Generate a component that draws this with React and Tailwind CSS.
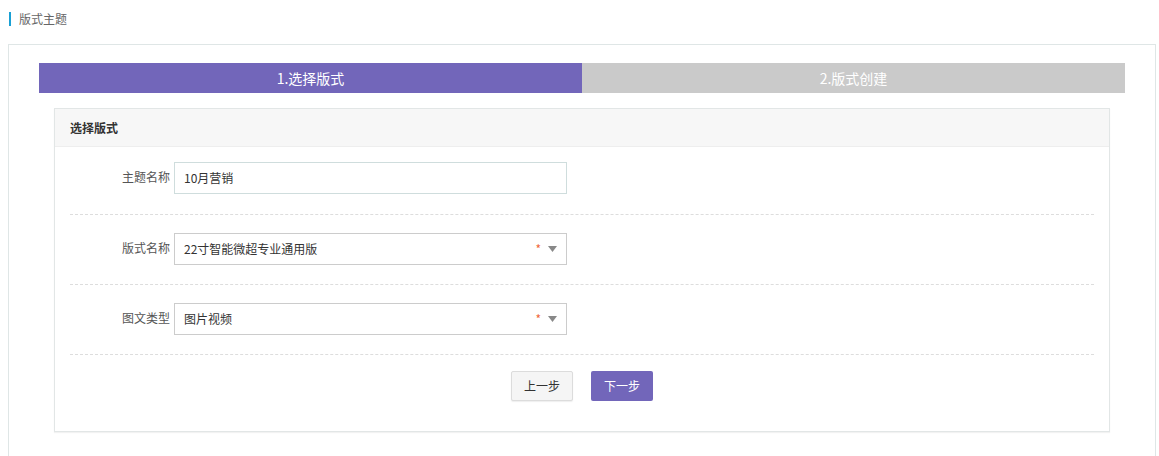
import React from "react";

const font = { fontFamily: '"Noto Sans CJK SC", "Noto Sans", sans-serif' };

function Caret() {
  return (
    <svg width="9" height="6" viewBox="0 0 9 6" className="ml-[7px]">
      <path d="M0 0 H9 L4.5 6 Z" fill="#888" />
    </svg>
  );
}

function Row({ label, children, first }) {
  return (
    <div
      className={`flex items-start border-b border-dashed border-[#dddddd] ${
        first ? "pt-[15px] pb-[20px]" : "pt-[18px] pb-[19px]"
      }`}
    >
      <div className="w-[104px] pr-[4px] pt-[6px] text-right text-[12px] leading-[18px] text-[#555]">
        {label}
      </div>
      {children}
    </div>
  );
}

function Select({ value }) {
  return (
    <div className="flex h-[32px] w-[393px] items-center border border-[#cccccc] bg-white pl-[9px] pr-[9px] text-[12px] text-[#333]">
      <span className="flex-1">{value}</span>
      <span className="text-[12px] leading-none text-[#f0683c]">*</span>
      <Caret />
    </div>
  );
}

export default function App() {
  return (
    <div className="h-[456px] w-[1159px] overflow-hidden bg-white" style={font}>
      <div className="flex h-[44px] items-start pl-[9px] pt-[12px]">
        <div className="mr-[8px] h-[14px] w-[2px] bg-[#1aa0d4]" />
        <div className="text-[12px] leading-[14px] text-[#666]">版式主题</div>
      </div>
      <div className="ml-[8px] mr-[3px] h-[420px] border border-[#dfe6e6] px-[30px] pt-[18px]">
        <div className="flex h-[30px] text-[14px] text-white">
          <div className="flex flex-1 items-center justify-center bg-[#7266ba]">1.选择版式</div>
          <div className="flex flex-1 items-center justify-center bg-[#cacaca]">2.版式创建</div>
        </div>
        <div className="mx-[15px] mt-[15px] border border-[#e2e6e6] shadow-[0_1px_1px_rgba(0,0,0,0.05)]">
          <div className="flex h-[38px] items-center border-b border-[#eeeeee] bg-[#f7f7f7] pl-[15px] text-[12px] font-bold text-[#333]">
            选择版式
          </div>
          <div className="px-[15px]">
            <Row label="主题名称" first>
              <div className="flex h-[32px] w-[393px] items-center border border-[#cfdddd] bg-white pl-[9px] text-[12px] text-[#333]">
                10月营销
              </div>
            </Row>
            <Row label="版式名称">
              <Select value="22寸智能微超专业通用版" />
            </Row>
            <Row label="图文类型">
              <Select value="图片视频" />
            </Row>
            <div className="flex justify-center gap-[18px] pt-[16px] pb-[30px]">
              <button className="flex h-[30px] w-[62px] items-center justify-center rounded-[2px] border border-[#dcdcdc] bg-[#f5f5f5] text-[12px] text-[#333] shadow-[0_1px_1px_rgba(90,90,90,0.1)]">
                上一步
              </button>
              <button className="flex h-[30px] w-[62px] items-center justify-center rounded-[2px] bg-[#7266ba] text-[12px] text-white">
                下一步
              </button>
            </div>
          </div>
        </div>
      </div>
    </div>
  );
}
